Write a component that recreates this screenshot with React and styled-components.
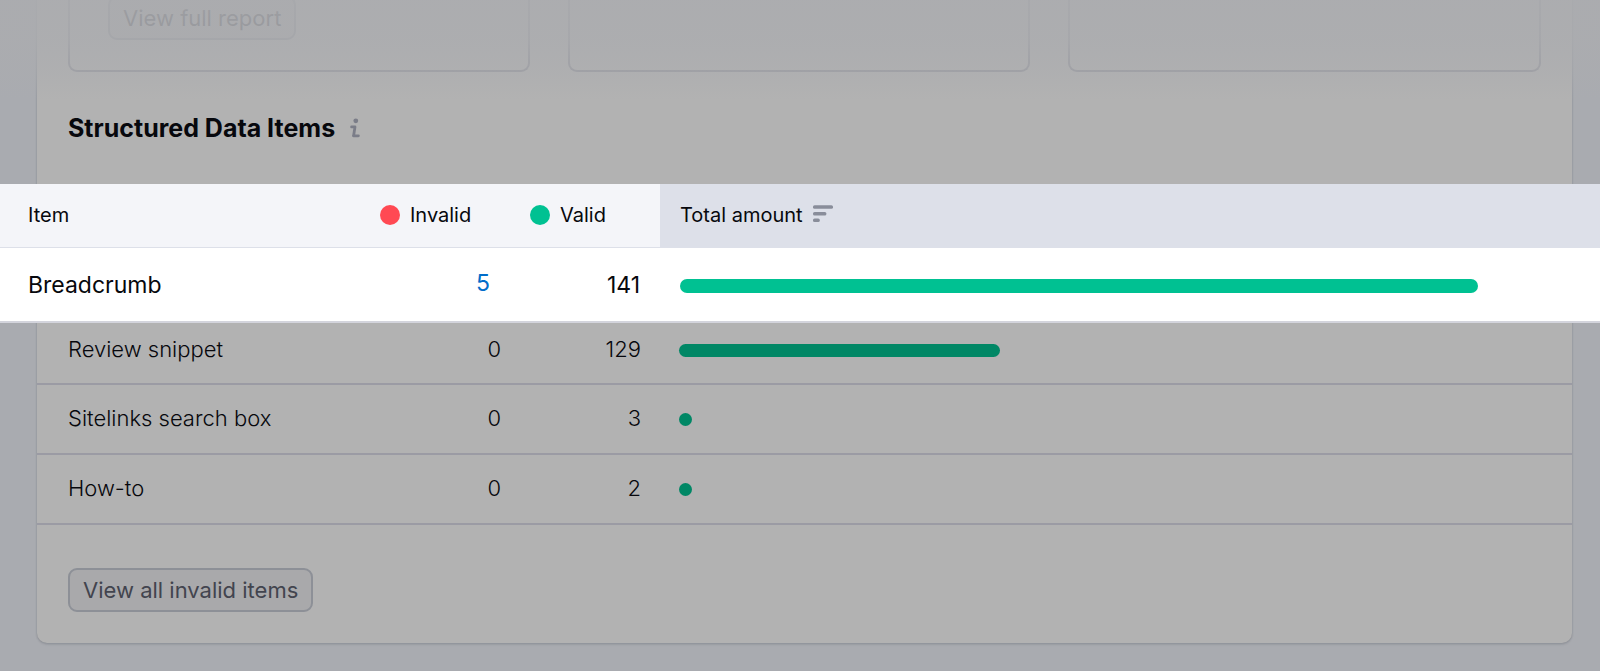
import styled, {createGlobalStyle} from "styled-components";

const GlobalStyle = createGlobalStyle`
    * {
        box-sizing: border-box;
    }
    body {
        margin: 0;
        background-color: #a9abb0;
        font-family: Inter, 'Liberation Sans', sans-serif;
        color: #07080d;
    }
`
const Page = styled.div`
    position: relative;
    padding: 0 28px 28px 37px;
    overflow: hidden;
`
const TopFade = styled.div`
    position: absolute;
    top: 0;
    left: 0;
    right: 0;
    height: 100px;
    background: linear-gradient(
        rgba(171, 172, 175, 0.88) 0,
        rgba(171, 172, 175, 0.8) 40px,
        rgba(171, 172, 175, 0.5) 72px,
        rgba(171, 172, 175, 0) 100px
    );
    pointer-events: none;
`
const Card = styled.main`
    background-color: #b2b2b2;
    border-radius: 0 0 10px 10px;
    box-shadow: 0 0 2px rgba(60, 62, 75, 0.3), 0 2px 2px rgba(60, 62, 75, 0.12);
`
const SummaryRow = styled.section`
    display: grid;
    grid-template-columns: 462fr 462fr 473fr;
    gap: 38px;
    padding: 0 31px;
`
const SummaryCard = styled.div`
    height: 72px;
    padding: 0 38px;
    border: 2px solid #94959c;
    border-top: none;
    border-radius: 0 0 9px 9px;
`
const Button = styled.button`
    display: block;
    height: 44px;
    padding: 0 13px;
    border: 2px solid #8d9097;
    border-radius: 9px;
    background-color: #a9a9ab;
    color: #42444e;
    font-family: inherit;
    font-size: 22px;
    font-weight: 400;
    line-height: 38px;
    white-space: nowrap;
    cursor: pointer;
`
const ReportButton = styled(Button)`
    margin-top: -4px;
`
const Title = styled.header`
    display: flex;
    align-items: center;
    gap: 15px;
    height: 112px;
    padding: 0 31px;
    h2{
        margin: 0;
        font-size: 25px;
        font-weight: 700;
        line-height: 32px;
    }
`
const Table = styled.table`
    width: 100%;
    table-layout: fixed;
    border-collapse: separate;
    border-spacing: 0;
    th, td{
        padding: 0;
        font-weight: ${p => p.$weight};
        text-align: left;
    }
`
const Spotlight = styled.div`
    position: relative;
    margin: 0 -28px 0 -37px;
    background-color: #ffffff;
`
const HeadCell = styled.th`
    height: 64px;
    background-color: ${p => p.$sorted ? '#dde0e9' : '#f4f5f9'};
    border-bottom: 1px solid #dde0e9;
    font-size: 20px;
    line-height: 24px;
    && {
        padding-left: ${p => p.$left}px;
        padding-bottom: 2px;
    }
`
const Label = styled.span`
    display: flex;
    align-items: center;
    gap: 10px;
`
const Dot = styled.span`
    width: 20px;
    height: 20px;
    border-radius: 50%;
    background-color: ${p => p.$color};
`
const SpotCell = styled.td`
    height: 75px;
    border-bottom: 2px solid #d3d4dc;
    font-size: 23px;
    line-height: 28px;
    && {
        padding-left: ${p => p.$left || 0}px;
        padding-right: ${p => p.$right || 0}px;
        text-align: ${p => p.$number ? 'right' : 'left'};
    }
    a{
        display: block;
        padding-bottom: 4px;
        color: #006dca;
        text-decoration: none;
    }
`
const Cell = styled.td`
    height: ${p => p.$first ? 62 : 70}px;
    border-bottom: 2px solid #9b9ba4;
    font-size: 22px;
    line-height: 28px;
    && {
        padding-left: ${p => p.$left || 0}px;
        padding-right: ${p => p.$right || 0}px;
        padding-bottom: ${p => p.$first ? 9 : 2}px;
        text-align: ${p => p.$number ? 'right' : 'left'};
    }
`
const Bar = styled.div`
    height: ${p => p.$size}px;
    min-width: ${p => p.$size}px;
    margin-top: 3px;
    border-radius: 7px;
    background-color: ${p => p.$color};
`
const Footer = styled.footer`
    padding: 43px 31px 31px;
`

const InfoIcon = () => (
    <svg width="10" height="20" viewBox="0 0 10 20" fill="none" stroke="#7b7d88" strokeWidth="2.8"
         strokeLinecap="round" strokeLinejoin="round" aria-hidden="true">
        <circle cx="5.8" cy="2.8" r="2.4" fill="#7b7d88" stroke="none"/>
        <path d="M1.6 8.9H5L3.6 17.8M3.4 17.8H8.4"/>
    </svg>
)

const SortIcon = () => (
    <svg width="20" height="20" viewBox="0 0 20 20" fill="#898d9a" aria-hidden="true">
        <rect x="0" y="0.2" width="20" height="3.6" rx="1.6"/>
        <rect x="0" y="6.9" width="13.4" height="3.6" rx="1.6"/>
        <rect x="0" y="13.5" width="6.8" height="3.6" rx="1.6"/>
    </svg>
)

const items = [
    {name: 'Review snippet', invalid: 0, valid: 129, share: 36},
    {name: 'Sitelinks search box', invalid: 0, valid: 3, share: 1},
    {name: 'How-to', invalid: 0, valid: 2, share: 1},
]

const App = () => {
    return (
        <Page>
            <GlobalStyle/>
            <Card>
                <SummaryRow>
                    <SummaryCard>
                        <ReportButton>View full report</ReportButton>
                    </SummaryCard>
                    <SummaryCard/>
                    <SummaryCard/>
                </SummaryRow>
                <Title>
                    <h2>Structured Data Items</h2>
                    <InfoIcon/>
                </Title>
                <Spotlight>
                    <Table $weight={400}>
                        <colgroup>
                            <col style={{width: 360}}/>
                            <col style={{width: 150}}/>
                            <col style={{width: 150}}/>
                            <col/>
                        </colgroup>
                        <thead>
                            <tr>
                                <HeadCell scope="col" $left={28}>Item</HeadCell>
                                <HeadCell scope="col" $left={20}>
                                    <Label><Dot $color="#ff4953"/>Invalid</Label>
                                </HeadCell>
                                <HeadCell scope="col" $left={20}>
                                    <Label><Dot $color="#00c192"/>Valid</Label>
                                </HeadCell>
                                <HeadCell scope="col" $left={20} $sorted aria-sort="descending">
                                    <Label>Total amount <SortIcon/></Label>
                                </HeadCell>
                            </tr>
                        </thead>
                        <tbody>
                            <tr>
                                <SpotCell as="th" scope="row" $left={28}>Breadcrumb</SpotCell>
                                <SpotCell $number $right={20}><a href="#invalid">5</a></SpotCell>
                                <SpotCell $number $right={20}>141</SpotCell>
                                <SpotCell $left={20} $right={33}>
                                    <Bar $size={14} $color="#00c192" style={{width: '90%'}}/>
                                </SpotCell>
                            </tr>
                        </tbody>
                    </Table>
                </Spotlight>
                <Table $weight={300} aria-label="Structured data items">
                    <colgroup>
                        <col style={{width: 334}}/>
                        <col style={{width: 150}}/>
                        <col style={{width: 140}}/>
                        <col/>
                    </colgroup>
                    <tbody>
                        {items.map((item, i) => (
                            <tr key={item.name}>
                                <Cell as="th" scope="row" $first={i === 0} $left={31}>{item.name}</Cell>
                                <Cell $first={i === 0} $number $right={20}>{item.invalid}</Cell>
                                <Cell $first={i === 0} $number $right={20}>{item.valid}</Cell>
                                <Cell $first={i === 0} $left={18}>
                                    <Bar $size={13} $color="#008765" style={{width: `${item.share}%`}}/>
                                </Cell>
                            </tr>
                        ))}
                    </tbody>
                </Table>
                <Footer>
                    <Button>View all invalid items</Button>
                </Footer>
            </Card>
            <TopFade/>
        </Page>
    )
}

export default App
